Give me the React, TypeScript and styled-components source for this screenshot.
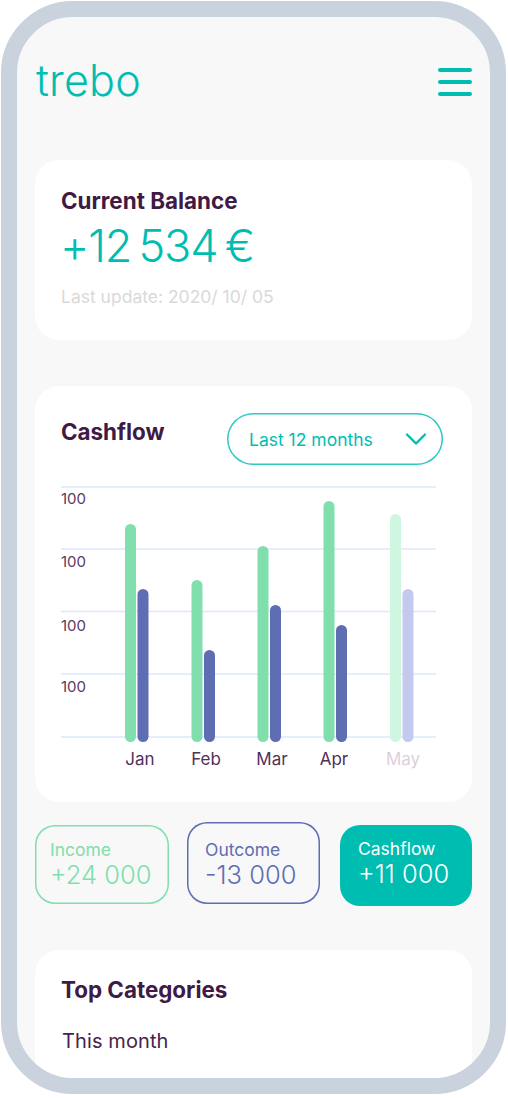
import styled, { createGlobalStyle } from "styled-components";

const months = [
  { name: "Jan", x: 125, income: 524, outcome: 589, labelX: 140 },
  { name: "Feb", x: 191.5, income: 580, outcome: 650, labelX: 206 },
  { name: "Mar", x: 257.5, income: 546, outcome: 605, labelX: 272 },
  { name: "Apr", x: 323.5, income: 501, outcome: 625, labelX: 334 },
  { name: "May", x: 390, income: 514, outcome: 589, labelX: 403, muted: true },
];

const gridLines = [487, 549, 611.5, 674, 737];
const axisLabels = [498, 561, 625, 686];

const CHART_TOP = 480;
const CHART_LEFT = 61;
const BASELINE = 742;

const GlobalStyle = createGlobalStyle`
  html, body {
    margin: 0;
    padding: 0;
    background: #fff;
  }
  body {
    font-family: Inter, "Liberation Sans", sans-serif;
    color: #3f1a44;
  }
`;

const App = () => {
  return (
    <>
      <GlobalStyle />
      <Phone>
        <Header>
          <Logo>trebo</Logo>
          <Burger aria-label="Menu">
            <BurgerLine />
            <BurgerLine />
            <BurgerLine />
          </Burger>
        </Header>

        <BalanceCard>
          <CardTitle>Current Balance</CardTitle>
          <Amount>+12 534 €</Amount>
          <Updated>Last update: 2020/ 10/ 05</Updated>
        </BalanceCard>

        <CashflowCard>
          <CashflowHeader>
            <CardTitle>Cashflow</CardTitle>
            <PeriodSelect>
              Last 12 months
              <svg width="22" height="14" viewBox="0 0 22 14" fill="none">
                <path
                  d="M2 2.5 L11 11.5 L20 2.5"
                  stroke="#00bdb2"
                  strokeWidth="2.4"
                  strokeLinecap="round"
                  strokeLinejoin="round"
                />
              </svg>
            </PeriodSelect>
          </CashflowHeader>
          <ChartSvg width="376" height="296" viewBox={`${CHART_LEFT} ${CHART_TOP} 376 296`}>
            {gridLines.map((y) => (
              <line key={y} x1={61} x2={436} y1={y} y2={y} stroke="#dde8fd" strokeWidth="1.4" />
            ))}
            {axisLabels.map((y) => (
              <AxisText key={y} x={61} y={y + 6}>
                100
              </AxisText>
            ))}
            {months.map((m) => (
              <g key={m.name}>
                <rect
                  x={m.x}
                  y={m.income}
                  width="11"
                  height={BASELINE - m.income}
                  rx="5.5"
                  fill={m.muted ? "#cef6e1" : "#80dfad"}
                />
                <rect
                  x={m.x + 12.5}
                  y={m.outcome}
                  width="11"
                  height={BASELINE - m.outcome}
                  rx="5.5"
                  fill={m.muted ? "#c3caee" : "#5f6db2"}
                />
                <MonthText x={m.labelX} y={765} $muted={m.muted}>
                  {m.name}
                </MonthText>
              </g>
            ))}
          </ChartSvg>
        </CashflowCard>

        <StatRow>
          <StatCard $color="#80dfad" $width={134} $height={79} $top={3} $inset={15} $lead={13}>
            <StatLabel>Income</StatLabel>
            <StatValue>+24 000</StatValue>
          </StatCard>
          <StatCard $color="#5f6db2" $width={133} $height={82} $top={0} $inset={18} $lead={16}>
            <StatLabel>Outcome</StatLabel>
            <StatValue>-13 000</StatValue>
          </StatCard>
          <StatCard
            $color="#fff"
            $fill="#00bdb2"
            $width={132}
            $height={81}
            $top={3}
            $left={2}
            $inset={18}
            $lead={12}
          >
            <StatLabel>Cashflow</StatLabel>
            <StatValue>+11 000</StatValue>
          </StatCard>
        </StatRow>

        <CategoriesCard>
          <CardTitle>Top Categories</CardTitle>
          <CategoriesPeriod>This month</CategoriesPeriod>
        </CategoriesCard>
      </Phone>
    </>
  );
};

export default App;

const Phone = styled.div`
  box-sizing: border-box;
  width: 505px;
  height: 1093px;
  margin: 1px 0 0 1px;
  border: 16px solid #cad2de;
  border-radius: 72px;
  background: #f8f8f8;
  overflow: hidden;
  padding: 0 18px;
`;

const Header = styled.header`
  height: 143px;
  display: flex;
  justify-content: space-between;
  align-items: flex-start;
  padding: 0 0 0 1px;
`;

const Logo = styled.div`
  margin-top: 33px;
  font-family: Inter, sans-serif;
  font-weight: 300;
  font-size: 43px;
  line-height: 60px;
  letter-spacing: 0.2px;
  color: #00bdb2;
`;

const Burger = styled.div`
  margin-top: 51px;
  width: 34px;
  display: flex;
  flex-direction: column;
  gap: 8.5px;
`;

const BurgerLine = styled.span`
  display: block;
  height: 3.5px;
  border-radius: 2px;
  background: #00bdb2;
`;

const Card = styled.section`
  box-sizing: border-box;
  width: 437px;
  background: #fff;
  border-radius: 24px;
  padding: 0 26px;
`;

const BalanceCard = styled(Card)`
  height: 180px;
  padding-top: 27px;
`;

const CardTitle = styled.h2`
  margin: 0;
  font-family: Inter, sans-serif;
  font-weight: 650;
  font-size: 22.4px;
  line-height: 28px;
  color: #3f1a44;
`;

const Amount = styled.div`
  margin-top: 3px;
  margin-left: -1px;
  font-family: Inter, sans-serif;
  font-weight: 300;
  font-size: 45px;
  line-height: 56px;
  letter-spacing: -1.2px;
  word-spacing: -4px;
  color: #00bdb2;
`;

const Updated = styled.div`
  margin-top: 12px;
  font-size: 17.5px;
  line-height: 22px;
  color: #d9d9d9;
`;

const CashflowCard = styled(Card)`
  height: 416px;
  margin-top: 46px;
  padding-top: 27px;
`;

const CashflowHeader = styled.div`
  height: 67px;
  display: flex;
  justify-content: space-between;
  align-items: flex-start;
  margin-right: 3px;

  ${CardTitle} {
    margin-top: 5px;
  }
`;

const PeriodSelect = styled.div`
  box-sizing: border-box;
  width: 216px;
  height: 52px;
  display: flex;
  align-items: center;
  justify-content: space-between;
  padding: 0 16px 0 22px;
  box-shadow: inset 0 0 0 1.5px #2ec9c0;
  border-radius: 26px;
  font-size: 17.5px;
  color: #00bdb2;
`;

const ChartSvg = styled.svg`
  display: block;
  overflow: visible;
`;

const AxisText = styled.text`
  font-family: Inter, sans-serif;
  font-size: 15px;
  fill: #5b3a61;
`;

const MonthText = styled.text<{ $muted?: boolean }>`
  font-family: Inter, sans-serif;
  font-size: 17px;
  text-anchor: middle;
  fill: ${({ $muted }) => ($muted ? "#dccfe0" : "#52305a")};
`;

const StatRow = styled.div`
  display: flex;
  align-items: flex-start;
  gap: 18px;
  height: 128px;
  margin-top: 20px;
`;

const StatCard = styled.div<{
  $color: string;
  $fill?: string;
  $width: number;
  $height: number;
  $top: number;
  $left?: number;
  $inset: number;
  $lead: number;
}>`
  box-sizing: border-box;
  flex: none;
  width: ${({ $width }) => $width}px;
  height: ${({ $height }) => $height}px;
  margin-top: ${({ $top }) => $top}px;
  margin-left: ${({ $left }) => $left ?? 0}px;
  padding: ${({ $lead }) => $lead}px 0 0 ${({ $inset }) => $inset}px;
  box-shadow: ${({ $fill, $color }) => ($fill ? "none" : `inset 0 0 0 1.5px ${$color}`)};
  border-radius: 20px;
  background: ${({ $fill }) => $fill ?? "transparent"};
  color: ${({ $color }) => $color};
`;

const StatLabel = styled.div`
  font-size: 17.5px;
  line-height: 24px;
`;

const StatValue = styled.div`
  font-size: 25.5px;
  font-weight: 300;
  line-height: 26px;
`;

const CategoriesCard = styled(Card)`
  height: 140px;
  padding-top: 26px;
`;

const CategoriesPeriod = styled.div`
  margin-top: 24px;
  margin-left: 1px;
  font-size: 20px;
  line-height: 26px;
  letter-spacing: 0.1px;
  color: #46234b;
`;
